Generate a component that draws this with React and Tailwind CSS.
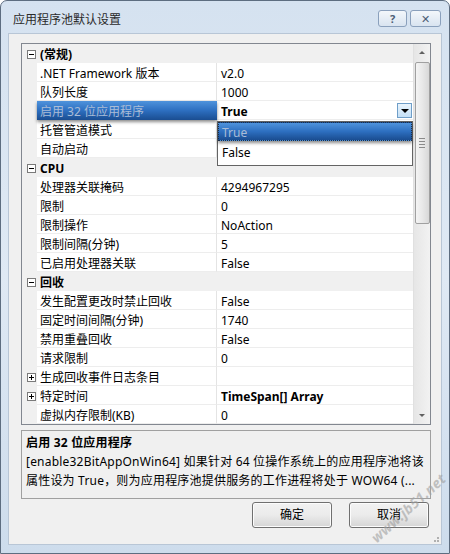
import React from "react";

const font = { fontFamily: '"Noto Sans", "Noto Sans CJK SC", sans-serif' };

// property grid rows: cat = category header, sub = collapsed expandable
const rows = [
  { cat: "(常规)" },
  { label: ".NET Framework 版本", value: "v2.0" },
  { label: "队列长度", value: "1000" },
  { label: "启用 32 位应用程序", value: "True", selected: true, bold: true },
  { label: "托管管道模式", value: "" },
  { label: "自动启动", value: "" },
  { cat: "CPU" },
  { label: "处理器关联掩码", value: "4294967295" },
  { label: "限制", value: "0" },
  { label: "限制操作", value: "NoAction" },
  { label: "限制间隔(分钟)", value: "5" },
  { label: "已启用处理器关联", value: "False" },
  { cat: "回收" },
  { label: "发生配置更改时禁止回收", value: "False" },
  { label: "固定时间间隔(分钟)", value: "1740" },
  { label: "禁用重叠回收", value: "False" },
  { label: "请求限制", value: "0" },
  { label: "生成回收事件日志条目", value: "", sub: true },
  { label: "特定时间", value: "TimeSpan[] Array", sub: true, bold: true },
  { label: "虚拟内存限制(KB)", value: "0" },
];

function Toggle({ open }) {
  return (
    <div className="w-[9px] h-[9px] border border-[#7a7a7a] bg-white flex items-center justify-center relative">
      <div className="w-[5px] h-px bg-black" />
      {!open && <div className="absolute w-px h-[5px] bg-black" />}
    </div>
  );
}

function Row({ r }) {
  if (r.cat) {
    return (
      <div className="h-[19px] flex items-center bg-[#f0f0f0]">
        <div className="w-[15px] flex justify-center pl-[3px] pt-[2px]">
          <Toggle open />
        </div>
        <span className="pl-[3px] pt-[3px] text-[12px] font-bold text-black">{r.cat}</span>
      </div>
    );
  }
  return (
    <div className="h-[19px] flex">
      <div className="w-[15px] bg-[#f0f0f0] flex items-center justify-center pl-[3px] pt-[2px]">
        {r.sub && <Toggle />}
      </div>
      <div
        className={
          r.selected
            ? "w-[180px] flex items-center pl-[3px] pt-[3px] text-[12px] text-[#a9bcd6] bg-gradient-to-b from-[#4f93dc] via-[#2d6fc0] to-[#1a4d91] shadow-[0_2px_3px_rgba(0,0,0,0.45)] relative z-10"
            : "w-[180px] flex items-center pl-[3px] pt-[3px] text-[12px] text-black border-b border-[#ededed] border-r border-r-[#e4e4e4]"
        }
      >
        {r.label}
      </div>
      <div
        className={
          "flex-1 flex items-center pl-[4px] text-[12px] text-black border-b border-[#ededed] " +
          (r.bold ? "font-bold" : "")
        }
      >
        <span className="flex-1 pt-[3px]">{r.value}</span>
        {r.selected && (
          <div className="w-[15px] h-[15px] mr-[1px] mt-[1px] border border-[#6f9ec8] bg-gradient-to-b from-[#eaf4fc] to-[#c4e0f6] flex items-center justify-center">
            <div className="w-0 h-0 border-l-[4px] border-r-[4px] border-t-[4px] border-l-transparent border-r-transparent border-t-black" />
          </div>
        )}
      </div>
    </div>
  );
}

function ScrollBar() {
  return (
    <div className="w-[17px] bg-gradient-to-r from-[#e6e6e6] to-[#f2f2f2] border-l border-[#e0e0e0] flex flex-col items-center">
      <div className="h-[17px] flex items-center justify-center">
        <div className="w-0 h-0 border-l-[3px] border-r-[3px] border-b-[3px] border-l-transparent border-r-transparent border-b-[#606060]" />
      </div>
      <div className="w-[15px] h-[162px] mt-px rounded-[2px] border border-[#a0a0a0] bg-gradient-to-r from-[#f4f4f4] via-[#e8e8e8] to-[#d8d8d8] flex flex-col items-center justify-center gap-[2px]">
        <div className="w-[6px] h-px bg-[#8a8a8a]" />
        <div className="w-[6px] h-px bg-[#8a8a8a]" />
        <div className="w-[6px] h-px bg-[#8a8a8a]" />
        <div className="w-[6px] h-px bg-[#8a8a8a]" />
      </div>
      <div className="flex-1" />
      <div className="h-[17px] flex items-center justify-center">
        <div className="w-0 h-0 border-l-[3px] border-r-[3px] border-t-[3px] border-l-transparent border-r-transparent border-t-[#606060]" />
      </div>
    </div>
  );
}

function CaptionButton({ children, className }) {
  return (
    <div
      className={
        "h-[17px] border border-[#8aa0bc] rounded-[3px] bg-gradient-to-b from-[#f3f7fb] to-[#d9e4f0] flex items-center justify-center text-[11px] leading-none text-[#4b5d75] " +
        className
      }
    >
      {children}
    </div>
  );
}

function Button({ children }) {
  return (
    <div className="w-[80px] h-[26px] rounded-[3px] border border-[#707070] bg-gradient-to-b from-[#f2f2f2] via-[#ebebeb] to-[#d5d5d5] flex items-center justify-center text-[12px] text-black shadow-[inset_0_0_0_1px_#fcfcfc]">
      {children}
    </div>
  );
}

export default function App() {
  return (
    <div
      className="w-[450px] h-[554px] relative rounded-t-[7px] border border-[#5d6d80] bg-gradient-to-b from-[#d5e2f0] via-[#dfe9f4] to-[#cddcec] flex flex-col overflow-hidden"
      style={font}
    >
      {/* caption */}
      <div className="h-[32px] flex items-center pl-[12px] pr-[8px]">
        <span className="flex-1 text-[12px] text-[#2a2a2a] pt-[6px]">应用程序池默认设置</span>
        <div className="flex gap-[3px] pt-[2px]">
          <CaptionButton className="w-[29px] font-bold">?</CaptionButton>
          <CaptionButton className="w-[31px]">✕</CaptionButton>
        </div>
      </div>

      {/* client area */}
      <div className="flex-1 mx-[7px] mb-[8px] bg-[#f0f0f0] border border-[#b8c6d6] flex flex-col pt-[9px] pl-[12px] pr-[10px] relative">
        <div className="h-[382px] border border-[#828790] bg-white flex relative">
          <div className="flex-1 flex flex-col">
            {rows.map((r, i) => (
              <Row key={i} r={r} />
            ))}
          </div>
          <ScrollBar />

          {/* open dropdown under the selected value */}
          <div className="absolute left-[195px] top-[77px] w-[196px] h-[45px] bg-white border border-[#646464] z-20 flex flex-col">
            <div className="h-[19px] flex items-center pl-[3px] pt-[2px] text-[12px] text-[#a9bcd6] bg-gradient-to-b from-[#4f93dc] via-[#2d6fc0] to-[#1a4d91] border border-dotted border-[#1b2f4a] shadow-[0_2px_3px_rgba(0,0,0,0.45)]">
              True
            </div>
            <div className="h-[19px] flex items-center pl-[4px] pt-[4px] text-[12px] text-black">False</div>
          </div>
        </div>

        {/* description pane */}
        <div className="mt-[5px] h-[69px] border border-[#a0a0a0] bg-[#f0f0f0] px-[4px] pt-[2px] text-[12px] text-black leading-[19px] tracking-[0.2px]">
          <div className="font-bold">启用 32 位应用程序</div>
          <div className="whitespace-nowrap">[enable32BitAppOnWin64] 如果针对 64 位操作系统上的应用程序池将该</div>
          <div className="whitespace-nowrap">属性设为 True，则为应用程序池提供服务的工作进程将处于 WOW64 (...</div>
        </div>

        <div className="mt-[3px] flex justify-end gap-[17px] pr-[2px]">
          <Button>确定</Button>
          <Button>取消</Button>
        </div>

        {/* size grip */}
        <div className="absolute right-[2px] bottom-[2px] grid grid-cols-3 gap-px">
          <div />
          <div />
          <div className="w-[2px] h-[2px] bg-[#b0b0b0]" />
          <div />
          <div className="w-[2px] h-[2px] bg-[#b0b0b0]" />
          <div className="w-[2px] h-[2px] bg-[#b0b0b0]" />
        </div>
      </div>

      {/* site watermark */}
      <div className="absolute left-[372px] top-[528px] -rotate-[42deg] origin-left text-[14px] italic font-bold text-[#a0a0a0] opacity-60 tracking-wide pointer-events-none">
        www.jb51.net
      </div>
    </div>
  );
}
